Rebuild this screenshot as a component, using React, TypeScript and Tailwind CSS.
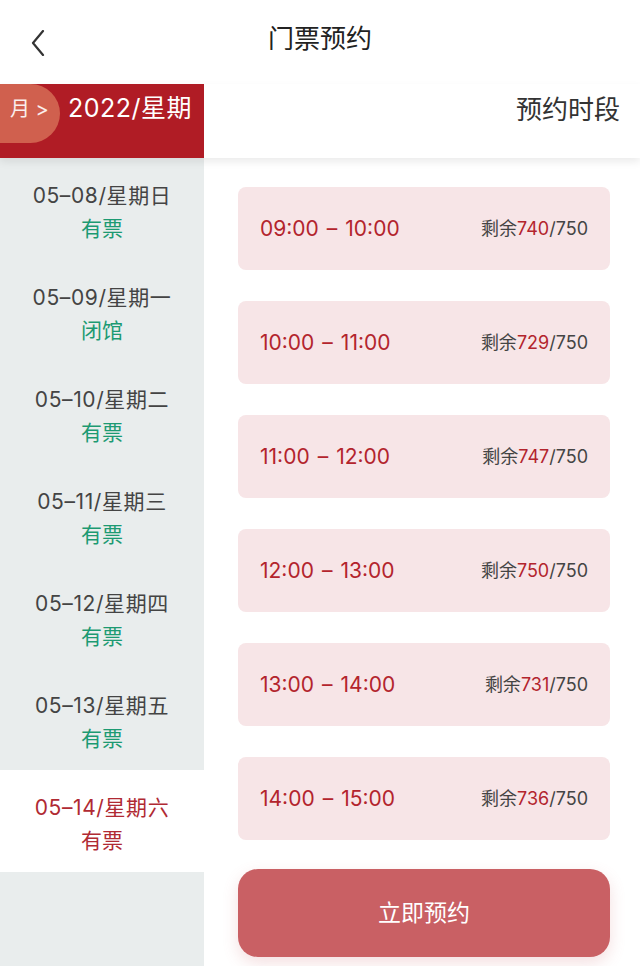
const dates = [
  { date: "05–08/星期日", status: "有票" },
  { date: "05–09/星期一", status: "闭馆" },
  { date: "05–10/星期二", status: "有票" },
  { date: "05–11/星期三", status: "有票" },
  { date: "05–12/星期四", status: "有票" },
  { date: "05–13/星期五", status: "有票" },
  { date: "05–14/星期六", status: "有票", active: true },
];

const slots = [
  { from: "09:00", to: "10:00", left: 740 },
  { from: "10:00", to: "11:00", left: 729 },
  { from: "11:00", to: "12:00", left: 747 },
  { from: "12:00", to: "13:00", left: 750 },
  { from: "13:00", to: "14:00", left: 731 },
  { from: "14:00", to: "15:00", left: 736 },
];

export default function App() {
  return (
    <div
      className="flex h-[966px] w-[640px] flex-col overflow-hidden bg-white"
      style={{ fontFamily: 'Inter, "Noto Sans CJK SC", sans-serif' }}
    >
      {/* top bar */}
      <div className="relative flex h-[84px] shrink-0 items-center justify-center">
        <button className="absolute left-[26px] top-[26px] p-1">
          <svg width="16" height="26" viewBox="0 0 16 26" fill="none">
            <polyline
              points="13,1 3,13 13,25"
              stroke="#333"
              strokeWidth="2.2"
              strokeLinecap="round"
              strokeLinejoin="round"
            />
          </svg>
        </button>
        <h1 className="pb-2 text-[26px] text-[#222]">门票预约</h1>
      </div>

      {/* tabs */}
      <div className="relative z-10 flex h-[74px] shrink-0 bg-white shadow-[0_4px_8px_rgba(0,0,0,0.08)]">
        <div className="relative flex w-[204px] overflow-hidden bg-[#b01c25]">
          <div className="flex h-[59px] w-[60px] shrink-0 items-start rounded-r-full bg-[#d0604e] pl-[10px] pt-[10px] text-[20px] text-white/90">
            月 &gt;
          </div>
          <div className="whitespace-nowrap pl-[8px] pt-[6px] text-[25px] tracking-[0.5px] text-white">
            2022/星期
          </div>
        </div>
        <div className="flex flex-1 justify-end pr-[20px] pt-[6px] text-[26px] text-[#333]">
          预约时段
        </div>
      </div>

      <div className="flex min-h-0 flex-1">
        {/* dates */}
        <div className="w-[204px] shrink-0 bg-[#e9eded]">
          {dates.map((d) => (
            <div
              key={d.date}
              className={`flex h-[102px] flex-col items-center justify-center pt-[6px] leading-[33px] ${
                d.active ? "bg-white" : ""
              }`}
            >
              <div
                className={`text-[21px] tracking-[0.6px] ${
                  d.active ? "text-[#b02a33]" : "text-[#444]"
                }`}
              >
                {d.date}
              </div>
              <div
                className={`text-[21px] ${
                  d.active ? "text-[#b02a33]" : "text-[#1c9a72]"
                }`}
              >
                {d.status}
              </div>
            </div>
          ))}
        </div>

        {/* slots */}
        <div className="flex flex-1 flex-col gap-[31px] pl-[34px] pr-[30px] pt-[29px]">
          {slots.map((s) => (
            <div
              key={s.from}
              className="flex h-[83px] shrink-0 items-center justify-between rounded-[8px] bg-[#f7e5e7] pl-[22px] pr-[22px]"
            >
              <span className="text-[21px] text-[#b3242d]">
                {s.from}
                <span className="mx-[8px]">–</span>
                {s.to}
              </span>
              <span className="text-[18px] text-[#444]">
                剩余<span className="text-[#b3242d]">{s.left}</span>/750
              </span>
            </div>
          ))}
          <button className="-mt-[2px] h-[88px] shrink-0 rounded-[20px] bg-[#c96064] text-[23px] text-white shadow-[0_6px_16px_rgba(201,96,100,0.2)]">
            立即预约
          </button>
        </div>
      </div>
    </div>
  );
}
